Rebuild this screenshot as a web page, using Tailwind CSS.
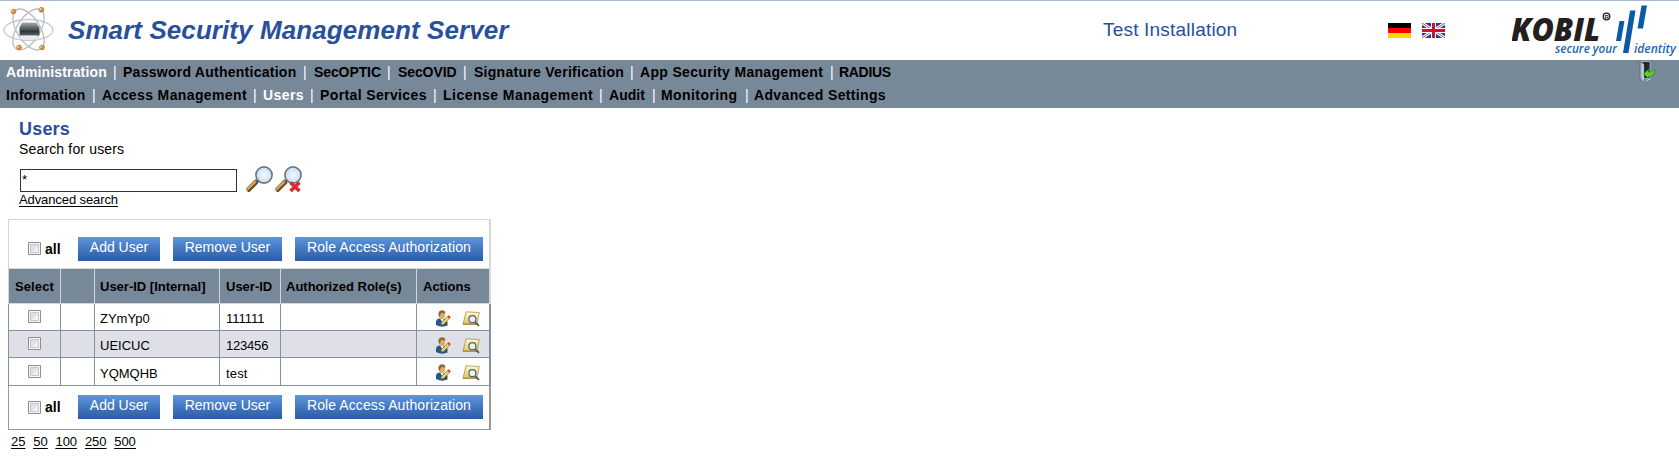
<!DOCTYPE html>
<html lang="en">
<head>
<meta charset="utf-8">
<title>Smart Security Management Server</title>
<script src="https://cdn.jsdelivr.net/npm/@tailwindcss/browser@4"></script>
</head>
<body class="bg-white text-black font-['Liberation_Sans',Arial,sans-serif] text-[13px] h-[465px] overflow-hidden">
<svg class="absolute w-0 h-0">
  <defs>
    <radialGradient id="lens"><stop offset="0" stop-color="#f4fbff"/><stop offset="1" stop-color="#c4def6"/></radialGradient>
    <linearGradient id="paper" x1="0" y1="0" x2="0" y2="1"><stop offset="0" stop-color="#fffbd0"/><stop offset="1" stop-color="#dcc45a"/></linearGradient>
    <linearGradient id="chip" x1="0" y1="0" x2="0" y2="1"><stop offset="0" stop-color="#a4adad"/><stop offset=".35" stop-color="#687070"/><stop offset=".7" stop-color="#30373c"/><stop offset="1" stop-color="#596268"/></linearGradient>
    <linearGradient id="door" x1="0" y1="0" x2="1" y2="0"><stop offset="0" stop-color="#7e96a8"/><stop offset="1" stop-color="#e4eef4"/></linearGradient>
    <symbol id="magnifier" viewBox="0 0 27 26">
      <path d="M1 25 11 15" stroke="#6b4a20" stroke-width="5"/>
      <path d="M.5 24 10.5 14.5" stroke="#cfa463" stroke-width="2.6"/>
      <path d="m10 16 2.5-2.5" stroke="#555" stroke-width="2.5"/>
      <circle cx="18" cy="9" r="8" fill="url(#lens)" stroke="#68757f" stroke-width="1.8"/>
      <circle cx="18" cy="9" r="6.8" fill="none" stroke="#d5e2e8" stroke-width="1"/>
    </symbol>
    <symbol id="useredit" viewBox="0 0 16 17">
      <path d="M1 11.5Q1.5 8.5 5 8.5h3Q12 9 12.5 12v3.5Q7 18 1 15z" fill="#1f5794"/>
      <path d="M5 8.5h4l-1.5 4z" fill="#e8eef2"/>
      <ellipse cx="7" cy="5" rx="3.2" ry="4" fill="#dcae68"/>
      <path d="M3.5 5.5Q2.8.5 7 .3q3.8.2 3.2 3.5L7 2.8 5.3 4.5 5 7z" fill="#8b6636"/>
      <path d="m5.5 15.5 1-3L13 6l2 2-6.5 6.5z" fill="#f2cf55" stroke="#8d6c1c" stroke-width=".6"/>
      <path d="m12.3 6.6 1.5-1.4 2 2-1.5 1.3z" fill="#c93838"/>
      <path d="m5.4 15.7.6-1.8 1.3 1.2z" fill="#333"/>
    </symbol>
    <symbol id="note" viewBox="0 0 18 16">
      <path d="M4 .8 17.3 1.5 15 12.8 1 13.5z" fill="url(#paper)" stroke="#a9924a" stroke-width=".8"/>
      <path d="m1 12.5 14 .3-.3 1.3L.8 13.8z" fill="#a78e3e"/>
      <path d="m13.2 11.2 3.8 3.6" stroke="#555" stroke-width="1.8"/>
      <circle cx="10.4" cy="8.2" r="3.5" fill="#e6f1f8" stroke="#596068" stroke-width="1.2"/>
    </symbol>
    <symbol id="checkbox" viewBox="0 0 13 13">
      <path d="M.5.5h12v12H.5z" fill="#f6f6f6" stroke="#8e8f8f"/>
      <path d="M2.5 2.5h8v8h-8z" fill="#dfe1e4" stroke="#c4c8ce"/>
      <path d="M10 4v6H4z" fill="#f1f1f3"/>
    </symbol>
  </defs>
</svg>

<header class="flex h-[60px] border-t border-[#a9b9cf]">
  <svg class="ml-[3px] mt-[5px] w-[51px] h-[46px]" viewBox="3 6 51 46" fill="none">
    <ellipse cx="28.5" cy="30" rx="24.5" ry="10.5" stroke="#c8c8ce" stroke-width="1.3"/>
    <ellipse cx="28.5" cy="29.5" rx="23" ry="11.5" transform="rotate(58 28.5 29.5)" stroke="#bcbcc3" stroke-width="1.3"/>
    <ellipse cx="28.5" cy="29.5" rx="23" ry="11.5" transform="rotate(122 28.5 29.5)" stroke="#bcbcc3" stroke-width="1.3"/>
    <path d="M22 22.5h14l3.5 5v8h-20v-8z" fill="url(#chip)"/>
    <path d="M19.5 36.5h20l-1 3h-18z" fill="#e4e9ea"/>
    <g fill="#c88a43"><circle cx="13.5" cy="11.5" r="2.8"/><circle cx="41.5" cy="9.8" r="2.8"/><circle cx="19" cy="47.5" r="2.8"/><circle cx="42" cy="47.5" r="2.8"/></g>
    <g fill="#f1cf9c"><circle cx="12.5" cy="10.8" r="1.1"/><circle cx="40.6" cy="9" r="1.1"/><circle cx="18" cy="46.8" r="1.1"/><circle cx="41" cy="46.8" r="1.1"/></g>
  </svg>
  <h1 class="ml-[14px] mt-[14px] w-[1035px] text-[26px] leading-[30px] tracking-[0.08px] font-bold italic text-[#28509b] whitespace-nowrap">Smart Security Management Server</h1>
  <div class="w-[285px] mt-[17px] text-[19px] leading-[24px] tracking-[0.2px] text-[#28509b]">Test Installation</div>
  <div class="flex gap-[11px] mt-[22px] w-[124px]">
    <svg class="w-[23px] h-[15px]" viewBox="0 0 23 15"><path d="M0 0h23v5H0z"/><path d="M0 5h23v5H0z" fill="#f00"/><path d="M0 10h23v5H0z" fill="#ffd800"/></svg>
    <svg class="w-[23px] h-[15px]" viewBox="0 0 23 15"><path d="M0 0h23v15H0z" fill="#233f8c"/><path d="m0 0 23 15M23 0 0 15" stroke="#fff" stroke-width="3"/><path d="m0 0 23 15M23 0 0 15" stroke="#d8405a" stroke-width="1"/><path d="M11.5 0v15M0 7.5h23" stroke="#fff" stroke-width="5"/><path d="M11.5 0v15M0 7.5h23" stroke="#d0102c" stroke-width="3"/></svg>
  </div>
  <svg class="w-[167px] h-[56px] mt-[3px]" viewBox="1512 4 167 56">
    <g font-family="'Open Sans','Noto Sans',sans-serif" font-style="italic">
      <text x="1511" y="40.5" font-size="32" font-weight="800" fill="#231f20" textLength="89" lengthAdjust="spacingAndGlyphs">KOBIL</text>
      <text x="1555" y="53" font-size="12.5" font-weight="600" fill="#1c68aa" textLength="62" lengthAdjust="spacingAndGlyphs">secure your</text>
      <text x="1634" y="53" font-size="12.5" font-weight="600" fill="#1c68aa" textLength="42" lengthAdjust="spacingAndGlyphs">identity</text>
    </g>
    <circle cx="1606.5" cy="16.5" r="3.3" fill="none" stroke="#231f20" stroke-width="1.3"/>
    <text x="1604.6" y="18.7" font-size="6" font-weight="700" font-family="Liberation Sans" fill="#231f20">R</text>
    <g fill="#0a5ba6"><path d="M1619.5 21h5l-3.5 20h-5z"/><path d="M1630 10.5h5.5l-7 42.5h-5.5z"/><path d="M1641.5 5.5h5.5l-4 23h-5.5z"/></g>
  </svg>
</header>

<nav class="flex justify-between h-[48px] bg-[#778899] pt-[1px] pl-[6px] pr-[22px] text-[14px] leading-[22px] font-bold whitespace-nowrap">
  <div>
    <div class="flex h-[23px]">
      <a class="w-[107px] tracking-[0.15px] text-white">Administration</a><span class="w-[10px] font-normal text-white">|</span>
      <a class="w-[180px] tracking-[0.26px]">Password Authentication</a><span class="w-[11px] font-normal text-white">|</span>
      <a class="w-[73px] tracking-[-0.1px]">SecOPTIC</a><span class="w-[11px] font-normal text-white">|</span>
      <a class="w-[65px] tracking-[-0.1px]">SecOVID</a><span class="w-[11px] font-normal text-white">|</span>
      <a class="w-[156px] tracking-[0.28px]">Signature Verification</a><span class="w-[10px] font-normal text-white">|</span>
      <a class="w-[190px] tracking-[0.32px]">App Security Management</a><span class="w-[9px] font-normal text-white">|</span>
      <a class="tracking-[-0.3px]">RADIUS</a>
    </div>
    <div class="flex h-[23px]">
      <a class="w-[86px] tracking-[0.24px]">Information</a><span class="w-[10px] font-normal text-white">|</span>
      <a class="w-[151px] tracking-[0.38px]">Access Management</a><span class="w-[10px] font-normal text-white">|</span>
      <a class="w-[47px] tracking-[0.4px] text-white">Users</a><span class="w-[10px] font-normal text-white">|</span>
      <a class="w-[113px] tracking-[0.38px]">Portal Services</a><span class="w-[10px] font-normal text-white">|</span>
      <a class="w-[156px] tracking-[0.48px]">License Management</a><span class="w-[10px] font-normal text-white">|</span>
      <a class="w-[43px] tracking-[0.05px]">Audit</a><span class="w-[9px] font-normal text-white">|</span>
      <a class="w-[84px] tracking-[0.42px]">Monitoring</a><span class="w-[9px] font-normal text-white">|</span>
      <a class="tracking-[0.35px]">Advanced Settings</a>
    </div>
  </div>
  <svg class="w-[18px] h-[22px]" viewBox="0 0 18 22">
    <path d="M3 .5h8v17H5z" fill="#20262a" stroke="#b3c2cc" stroke-width=".8"/>
    <path d="M.8.8 5 3v18.5L.8 17z" fill="url(#door)" stroke="#54646f" stroke-width=".6"/>
    <path d="M5 21.5 11 17v1.5l-4 2z" fill="#cfd8dd"/>
    <path d="M4.7 12.8 9.5 8.3v2.8q3 .8 4-2.3l2 .5q.5 6-6 6.2v2z" fill="#5fd02c" stroke="#2f8a12" stroke-width=".7"/>
  </svg>
</nav>

<main class="pl-[8px]">
  <section class="pl-[11px] pt-[10px]">
    <h2 class="text-[18px] leading-[22px] font-bold text-[#28509b] tracking-[0.2px]">Users</h2>
    <p class="text-[14px] leading-[18px] tracking-[0.16px]">Search for users</p>
    <div class="flex mt-[8px] h-[27px] pl-[1px]">
      <div class="w-[217px] h-[23px] mt-[3px] border border-[#333] pl-[1px] text-[13px] leading-[20px]">*</div>
      <svg class="ml-[9px] w-[27px] h-[26px]"><use href="#magnifier"/></svg>
      <svg class="ml-[2px] w-[27px] h-[26px]"><use href="#magnifier"/><path d="m15.5 16.5 9 8.5m0-8.5-9 8.5" stroke="#d92c30" stroke-width="3.6"/></svg>
    </div>
    <a class="block text-[13px] leading-[14px] tracking-[-0.1px] underline underline-offset-2 h-[26px]">Advanced search</a>
  </section>

  <section class="w-[483px]">
    <div class="flex h-[49px] border-t border-l border-r-2 border-[#d3d7da] pt-[17px] pl-[19px] text-[14px]">
      <svg class="w-[13px] h-[13px] mt-[5px]"><use href="#checkbox"/></svg>
      <b class="w-[33px] ml-[4px] mt-[3px] leading-[18px]">all</b>
      <div class="flex gap-[13px] text-white text-center leading-[20px] whitespace-nowrap">
        <a class="w-[82px] h-[24px] bg-linear-to-b from-[#5c97dc] to-[#2d5aa6]">Add User</a>
        <a class="w-[109px] h-[24px] bg-linear-to-b from-[#5c97dc] to-[#2d5aa6]">Remove User</a>
        <a class="w-[188px] h-[24px] tracking-[0.08px] bg-linear-to-b from-[#5c97dc] to-[#2d5aa6]">Role Access Authorization</a>
      </div>
    </div>
    <div class="grid grid-cols-[51px_33px_124px_60px_135px_72px] gap-px h-[36px] py-px pl-px pr-[2px] bg-[#d3d7da] font-bold leading-[35px] *:bg-[#778899] *:h-[34px] *:pl-[6px] whitespace-nowrap">
      <div class="tracking-[0.1px]">Select</div><div></div><div class="-indent-px">User-ID [Internal]</div><div>User-ID</div><div class="-indent-px">Authorized Role(s)</div><div>Actions</div>
    </div>
    <div class="grid grid-cols-[51px_33px_124px_60px_135px_72px] gap-px pl-px pr-[2px] pb-px h-[27px] bg-[#84929b] leading-[29px] *:bg-white *:pl-[6px] *:h-[26px]">
      <div><svg class="ml-[13px] mt-[6px] w-[13px] h-[13px]"><use href="#checkbox"/></svg></div><div></div><div class="-indent-px">ZYmYp0</div><div>111111</div><div></div>
      <div class="flex gap-[11px]"><svg class="ml-[12px] mt-[6px] w-[16px] h-[17px]"><use href="#useredit"/></svg><svg class="mt-[7px] w-[18px] h-[16px]"><use href="#note"/></svg></div>
    </div>
    <div class="grid grid-cols-[51px_33px_124px_60px_135px_72px] gap-px pl-px pr-[2px] pb-px h-[27px] bg-[#84929b] leading-[29px] *:bg-[#dfdfe8] *:pl-[6px] *:h-[26px]">
      <div><svg class="ml-[13px] mt-[6px] w-[13px] h-[13px]"><use href="#checkbox"/></svg></div><div></div><div class="-indent-px">UEICUC</div><div class="tracking-[-0.2px]">123456</div><div></div>
      <div class="flex gap-[11px]"><svg class="ml-[12px] mt-[6px] w-[16px] h-[17px]"><use href="#useredit"/></svg><svg class="mt-[7px] w-[18px] h-[16px]"><use href="#note"/></svg></div>
    </div>
    <div class="grid grid-cols-[51px_33px_124px_60px_135px_72px] gap-px pl-px pr-[2px] pb-px h-[28px] bg-[#84929b] leading-[31px] *:bg-white *:pl-[6px] *:h-[27px]">
      <div><svg class="ml-[13px] mt-[7px] w-[13px] h-[13px]"><use href="#checkbox"/></svg></div><div></div><div class="-indent-px">YQMQHB</div><div class="tracking-[0.15px]">test</div><div></div>
      <div class="flex gap-[11px]"><svg class="ml-[12px] mt-[6px] w-[16px] h-[17px]"><use href="#useredit"/></svg><svg class="mt-[7px] w-[18px] h-[16px]"><use href="#note"/></svg></div>
    </div>
    <div class="flex h-[44px] border-b border-l border-r-2 border-[#999] pt-[9px] pl-[19px] text-[14px]">
      <svg class="w-[13px] h-[13px] mt-[6px]"><use href="#checkbox"/></svg>
      <b class="w-[33px] ml-[4px] mt-[3px] leading-[18px]">all</b>
      <div class="flex gap-[13px] text-white text-center leading-[20px] whitespace-nowrap">
        <a class="w-[82px] h-[24px] bg-linear-to-b from-[#5c97dc] to-[#2d5aa6]">Add User</a>
        <a class="w-[109px] h-[24px] bg-linear-to-b from-[#5c97dc] to-[#2d5aa6]">Remove User</a>
        <a class="w-[188px] h-[24px] tracking-[0.08px] bg-linear-to-b from-[#5c97dc] to-[#2d5aa6]">Role Access Authorization</a>
      </div>
    </div>
  </section>
  <div class="flex gap-[8px] pl-[3px] pt-[4px] leading-[16px] tracking-[-0.1px] underline underline-offset-2">
    <a>25</a><a>50</a><a>100</a><a>250</a><a>500</a>
  </div>
</main>
</body>
</html>
